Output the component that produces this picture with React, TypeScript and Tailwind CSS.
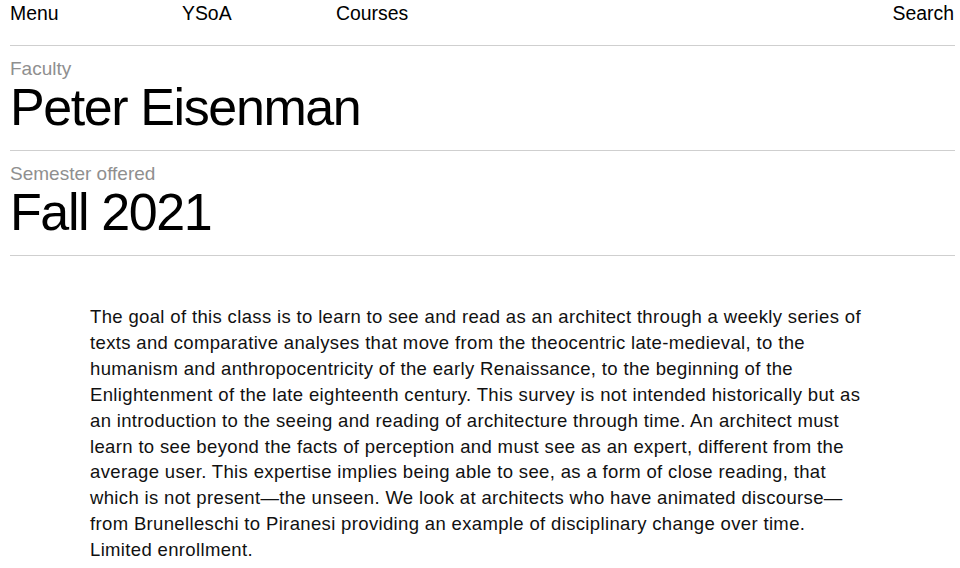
const navLinks = [
  { label: "Menu", width: "w-[172px]" },
  { label: "YSoA", width: "w-[154px]" },
  { label: "Courses", width: "" },
];

const details = [
  { label: "Faculty", value: "Peter Eisenman" },
  { label: "Semester offered", value: "Fall 2021" },
];

const description =
  "The goal of this class is to learn to see and read as an architect through a weekly series of texts and comparative analyses that move from the theocentric late-medieval, to the humanism and anthropocentricity of the early Renaissance, to the beginning of the Enlightenment of the late eighteenth century. This survey is not intended historically but as an introduction to the seeing and reading of architecture through time. An architect must learn to see beyond the facts of perception and must see as an expert, different from the average user. This expertise implies being able to see, as a form of close reading, that which is not present\u2014the unseen. We look at architects who have animated discourse\u2014from Brunelleschi to Piranesi providing an example of disciplinary change over time. Limited enrollment.";

function App() {
  return (
    <div className="min-h-screen bg-white pl-[10px] pr-[5px] font-['Liberation_Sans',Arial,sans-serif] text-black">
      <header className="flex h-[46px] items-start border-b border-[#cfcfcf] text-[19.4px] leading-[26px]">
        {navLinks.map((link) => (
          <a key={link.label} href="#" className={link.width}>
            {link.label}
          </a>
        ))}
        <a href="#" className="ml-auto pr-px">
          Search
        </a>
      </header>

      {details.map((item) => (
        <section
          key={item.label}
          className="h-[105px] border-b border-[#cfcfcf] pt-[12px]"
        >
          <p className="text-[19px] leading-[22px] text-[#8f8f8f]">{item.label}</p>
          <h1 className="mt-px text-[52px] leading-[52px] tracking-[-1.4px]">
            {item.value}
          </h1>
        </section>
      ))}

      <div className="pl-[80px] pt-[48px]">
        <p className="w-[776px] text-[18.5px] leading-[25.9px] tracking-[0.35px] text-[#111]">
          {description}
        </p>
      </div>
    </div>
  );
}

export default App;
